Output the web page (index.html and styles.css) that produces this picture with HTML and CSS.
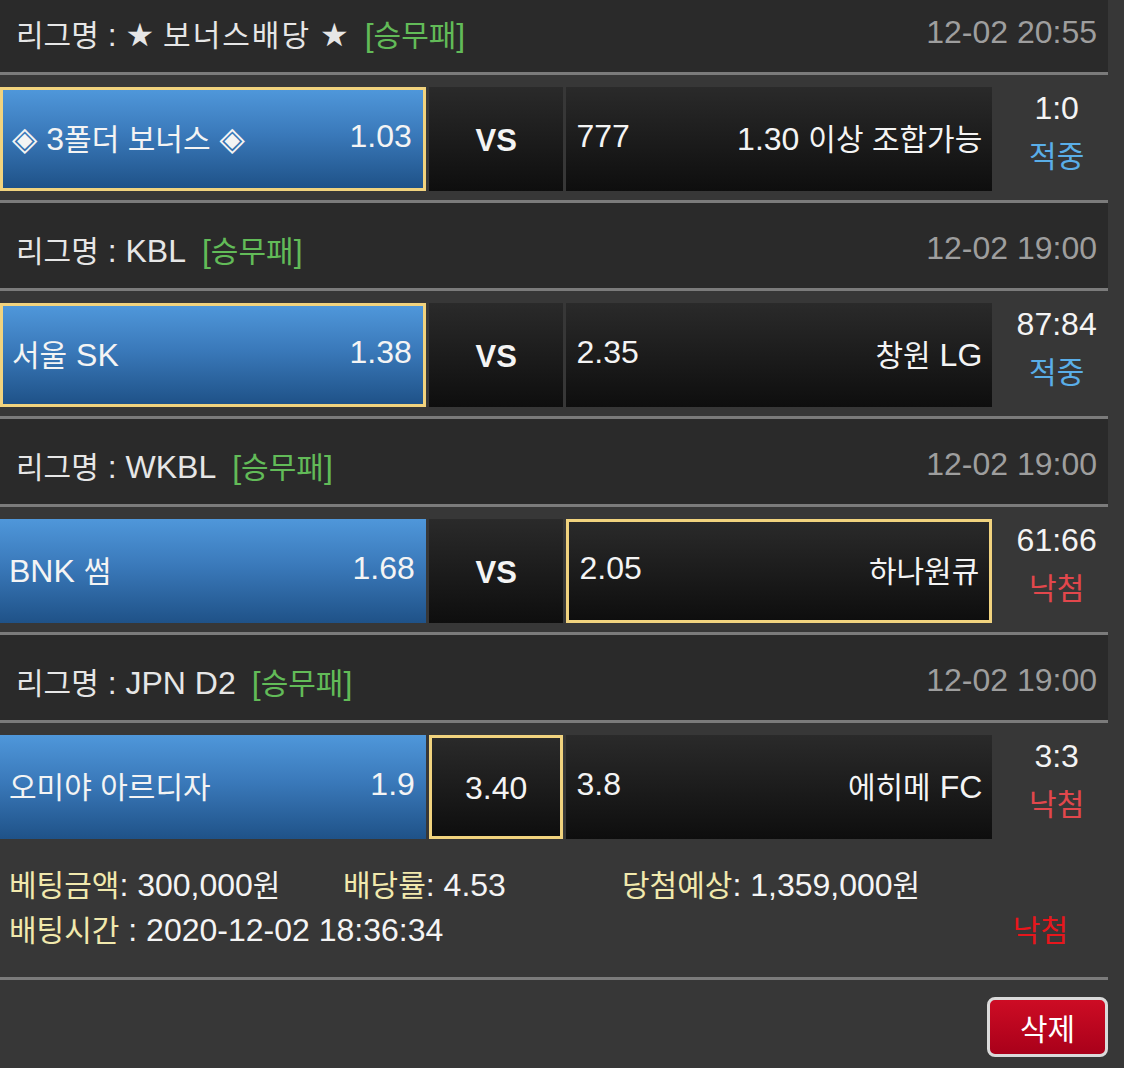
FILE: index.html
```html
<!DOCTYPE html>
<html lang="ko">
<head>
<meta charset="utf-8">
<title>베팅내역</title>
<link rel="stylesheet" href="styles.css">
</head>
<body>
<div class="page">
  <div class="list">
    <section class="block">
      <div class="league">
        <span class="lname"><span class="k">리그명</span> : <span class="star">★</span> <span class="k wide">보너스배당</span> <span class="star">★</span></span>
        <span class="type">[<span class="k">승무패</span>]</span>
        <span class="date">12-02 20:55</span>
      </div>
      <div class="match">
        <div class="cell home sel"><span><span class="dia">◈</span> 3<span class="k">폴더 보너스</span> <span class="dia">◈</span></span><span>1.03</span></div>
        <div class="cell mid"><b>VS</b></div>
        <div class="cell away"><span>777</span><span>1.30 <span class="k">이상 조합가능</span></span></div>
        <div class="result"><div>1:0</div><div class="k hit">적중</div></div>
      </div>
    </section>

    <section class="block">
      <div class="league">
        <span class="lname"><span class="k">리그명</span> : KBL</span>
        <span class="type">[<span class="k">승무패</span>]</span>
        <span class="date">12-02 19:00</span>
      </div>
      <div class="match">
        <div class="cell home sel"><span><span class="k">서울</span> SK</span><span>1.38</span></div>
        <div class="cell mid"><b>VS</b></div>
        <div class="cell away"><span>2.35</span><span><span class="k">창원</span> LG</span></div>
        <div class="result"><div>87:84</div><div class="k hit">적중</div></div>
      </div>
    </section>

    <section class="block">
      <div class="league">
        <span class="lname"><span class="k">리그명</span> : WKBL</span>
        <span class="type">[<span class="k">승무패</span>]</span>
        <span class="date">12-02 19:00</span>
      </div>
      <div class="match">
        <div class="cell home"><span>BNK <span class="k">썸</span></span><span>1.68</span></div>
        <div class="cell mid"><b>VS</b></div>
        <div class="cell away sel"><span>2.05</span><span class="k">하나원큐</span></div>
        <div class="result"><div>61:66</div><div class="k miss">낙첨</div></div>
      </div>
    </section>

    <section class="block last">
      <div class="league">
        <span class="lname"><span class="k">리그명</span> : JPN D2</span>
        <span class="type">[<span class="k">승무패</span>]</span>
        <span class="date">12-02 19:00</span>
      </div>
      <div class="match">
        <div class="cell home"><span class="k">오미야 아르디자</span><span>1.9</span></div>
        <div class="cell mid sel"><span>3.40</span></div>
        <div class="cell away"><span>3.8</span><span><span class="k">에히메</span> FC</span></div>
        <div class="result"><div>3:3</div><div class="k miss">낙첨</div></div>
      </div>
    </section>
  </div>

  <div class="summary">
    <div class="srow first">
      <span><span class="lbl k">베팅금액</span>: 300,000<span class="k">원</span></span>
      <span><span class="lbl k">배당률</span>: 4.53</span>
      <span><span class="lbl k">당첨예상</span>: 1,359,000<span class="k">원</span></span>
    </div>
    <div class="srow second">
      <span><span class="lbl k">배팅시간</span> : 2020-12-02 18:36:34</span>
      <span class="k lost">낙첨</span>
    </div>
  </div>

  <div class="footer">
    <button class="del k" type="button">삭제</button>
  </div>
</div>
</body>
</html>
```

FILE: styles.css
```css
html, body {
  margin: 0;
  padding: 0;
  background: #373737;
}

body {
  font-family: "Liberation Sans", "Noto Sans CJK KR", sans-serif;
  font-size: 32px;
  color: #f2f2f2;
  overflow: hidden;
}

.k {
  font-family: "Noto Sans CJK KR", "Liberation Sans", sans-serif;
  font-size: 30px;
}

.k.wide {
  letter-spacing: 2px;
}

.page {
  width: 1108px;
  height: 1068px;
  overflow: hidden;
}

.list {
  margin-top: -13px;
}

.block {
  border-bottom: 3px solid #7b7b7b;
}

.block.last {
  border-bottom: none;
}

.league {
  height: 88px;
  box-sizing: border-box;
  padding: 6px 11px 0 16px;
  display: flex;
  align-items: center;
  background: #2a2a2a;
  border-bottom: 3px solid #7b7b7b;
  color: #e6e6e6;
}

.star {
  font-family: "DejaVu Sans", sans-serif;
  font-size: 32px;
}

.dia {
  font-family: "DejaVu Sans", sans-serif;
  font-size: 33px;
}

.type {
  margin-left: 16px;
  color: #62bb58;
}

.date {
  margin-left: auto;
  color: #9e9e9e;
}

.match {
  display: flex;
  gap: 3px;
  padding: 12px 0 9px;
  height: 104px;
}

.cell {
  box-sizing: border-box;
  height: 104px;
  display: flex;
  align-items: center;
  justify-content: space-between;
  padding: 0 11px 5px 9px;
  background: linear-gradient(#2a2a2a, #0e0e0e);
  color: #f4f4f4;
}

.home {
  width: 427px;
  background: linear-gradient(#4f97da, #3a79ba 45%, #1f5288);
}

.mid {
  width: 135px;
  justify-content: center;
  padding: 0;
}

.mid b {
  font-size: 31px;
  padding-top: 4px;
}

.away {
  width: 427px;
  padding: 0 10px 5px 10px;
}

.sel {
  border: 3px solid #f1d37e;
}

.mid.sel {
  padding-top: 2px;
}

.result {
  width: 113px;
  box-sizing: border-box;
  padding-left: 10px;
  margin-top: -2px;
  text-align: center;
  line-height: 46px;
  color: #f4f4f4;
}

.result .k {
  font-size: 30px;
}

.hit {
  color: #5aaee8;
}

.miss {
  color: #e2474c;
}

.summary {
  height: 132px;
  box-sizing: border-box;
  padding: 13px 0 0 9px;
  border-bottom: 3px solid #7b7b7b;
}

.srow {
  height: 45px;
  line-height: 45px;
  color: #f4f4f4;
}

.srow.first {
  display: grid;
  grid-template-columns: 334px 279px auto;
}

.srow.second {
  display: flex;
  justify-content: space-between;
  padding-right: 40px;
}

.lbl {
  color: #f1e9ad;
}

.lost {
  color: #e8161c;
}

.footer {
  display: flex;
  justify-content: flex-end;
  padding-top: 17px;
}

.del {
  width: 121px;
  height: 60px;
  border: 3px solid #dadada;
  border-radius: 8px;
  background: linear-gradient(#cd0c24, #a9001a);
  color: #ffffff;
  font-size: 30px;
  padding: 0;
}
```
